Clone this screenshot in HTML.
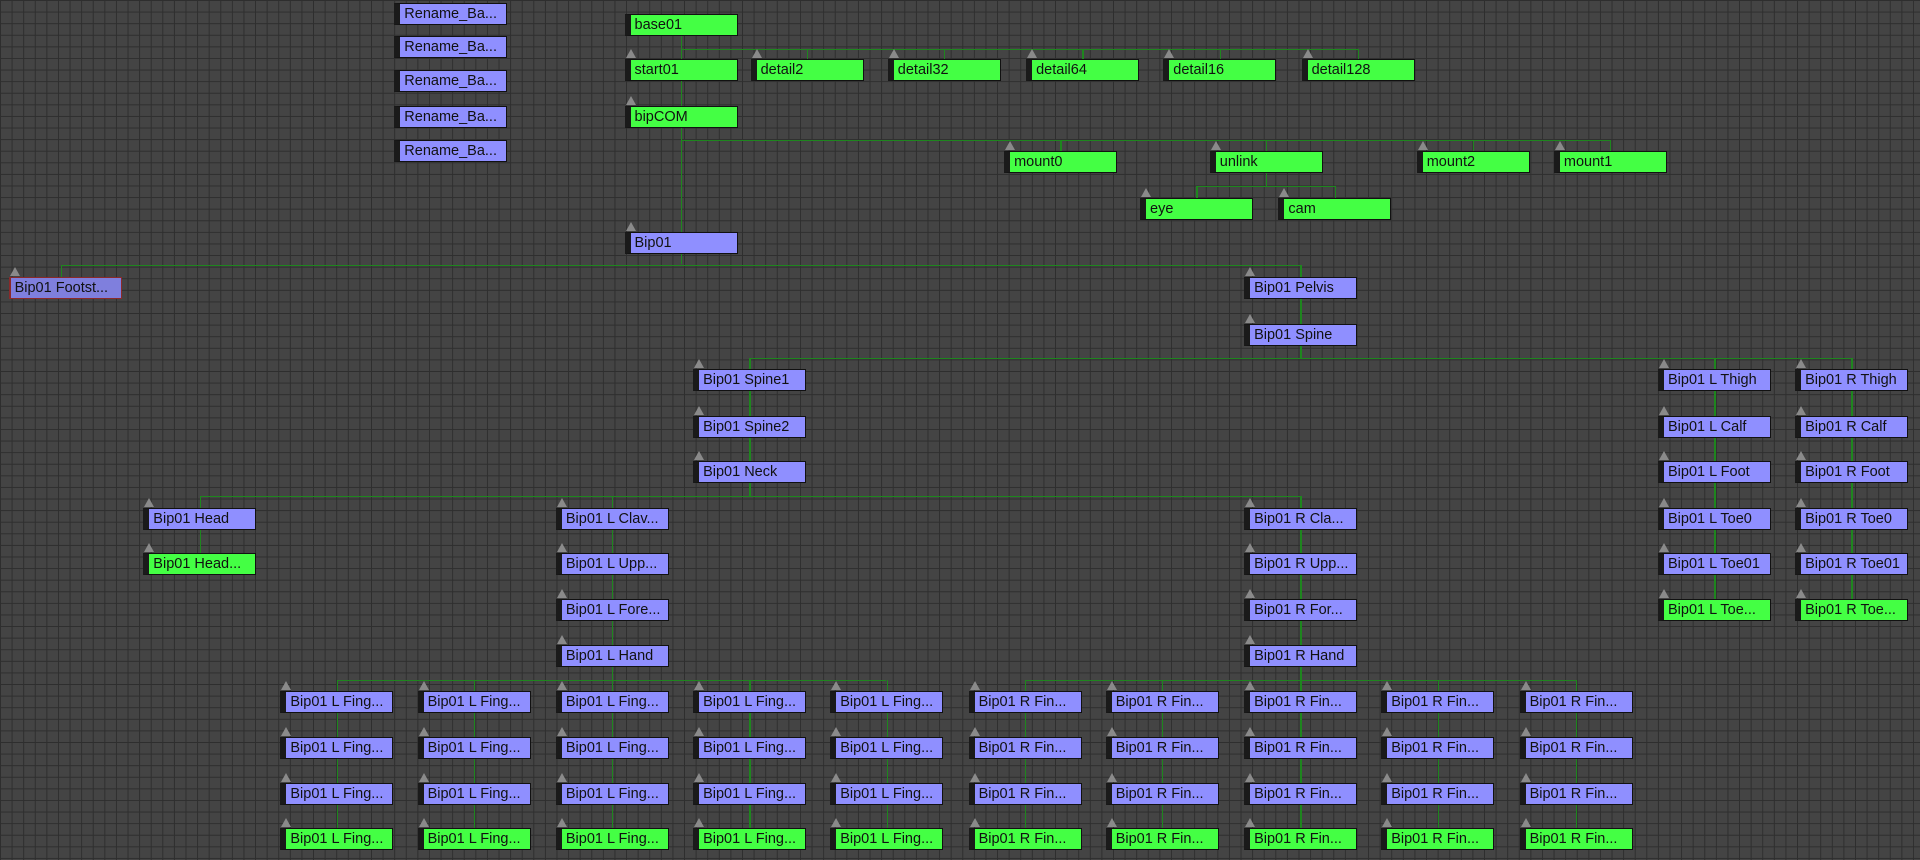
<!DOCTYPE html>
<html><head><meta charset="utf-8"><style>
html,body{margin:0;padding:0}
body{width:1920px;height:860px;overflow:hidden;position:relative;
background-color:#444;
background-image:linear-gradient(to right,#2e2e2e 1px,transparent 1px),linear-gradient(to bottom,#2e2e2e 1px,transparent 1px);
background-size:11.6px 11.6px;font-family:"Liberation Sans",sans-serif}
.n{position:absolute;width:106px;height:20px;border:1px solid #111;border-left:6px solid #1a1a1a;box-sizing:content-box;font-size:14.5px;line-height:20px;padding-left:0;color:#111;white-space:nowrap;overflow:hidden}
.n span{padding-left:4px}
.g{background:#44ff44}
.p{background:#8f8fff}
.t{position:absolute;width:0;height:0;border-left:5px solid transparent;border-right:5px solid transparent;border-bottom:9px solid #8a8a8a}
.l{position:absolute;background:#1e861e}
</style></head><body>
<div id="c"></div>
<script>
var S=1920/1568;
var R=[20,57,95,132,170,198,235,273,310,348,385,423,460,498,535,573,610,648,685];
var c=document.getElementById('c');var h='';
function node(x,yc,txt,cls,tri,extra){
 var L=x*S,T=(yc-8.5)*S;
 h+='<div class="n '+cls+'" style="left:'+L.toFixed(1)+'px;top:'+T.toFixed(1)+'px;'+(extra||'')+'"><span>'+txt+'</span></div>';
 if(tri!==false)h+='<div class="t" style="left:'+(L+1).toFixed(1)+'px;top:'+(T-10).toFixed(1)+'px"></div>';
}
function line(x1,y1,x2,y2){
 var a=Math.min(x1,x2)*S,b=Math.min(y1,y2)*S,w=Math.abs(x2-x1)*S,hh=Math.abs(y2-y1)*S;
 h+='<div class="l" style="left:'+a.toFixed(1)+'px;top:'+b.toFixed(1)+'px;width:'+Math.max(w,1.3).toFixed(1)+'px;height:'+Math.max(hh,1.3).toFixed(1)+'px"></div>';
}
function cx(x){return x+46}
function tree(px,py,kids,by){
 line(cx(px),py+8,cx(px),by);
 var xs=kids.map(function(k){return cx(k[0])});xs.push(cx(px));
 line(Math.min.apply(null,xs),by,Math.max.apply(null,xs),by);
 kids.forEach(function(k){line(cx(k[0]),by,cx(k[0]),k[1]-8)});
}
function chain(x,rows){for(var i=0;i<rows.length-1;i++)line(cx(x),rows[i]+8,cx(x),rows[i+1]-8)}
tree(510,R[0],[[510,R[1]],[613,R[1]],[725,R[1]],[838,R[1]],[950,R[1]],[1063,R[1]]],40);
chain(510,[R[1],R[2]]);
tree(510,R[2],[[820,R[3]],[988,R[3]],[1157,R[3]],[1269,R[3]],[510,198]],114);
tree(988,R[3],[[931,R[4]],[1044,R[4]]],152);
tree(510,198,[[4,235],[1016,235]],216);
chain(1016,[R[6],R[7]]);
tree(1016,R[7],[[566,R[8]],[1354,R[8]],[1466,R[8]]],292);
chain(566,[R[8],R[9],R[10]]);
tree(566,R[10],[[117,R[11]],[454,R[11]],[1016,R[11]]],405);
chain(117,[R[11],R[12]]);
chain(454,[R[11],R[12],R[13],R[14]]);
chain(1016,[R[11],R[12],R[13],R[14]]);
chain(1354,[R[8],R[9],R[10],R[11],R[12],R[13]]);
chain(1466,[R[8],R[9],R[10],R[11],R[12],R[13]]);
var LF=[229,341,454,566,678],RF=[791,903,1016,1128,1241];
tree(454,R[14],LF.map(function(x){return[x,R[15]]}),555);
tree(1016,R[14],RF.map(function(x){return[x,R[15]]}),555);
LF.concat(RF).forEach(function(x){chain(x,[R[15],R[16],R[17],R[18]])});
[11,38,66,95,123].forEach(function(y){node(322,y,'Rename_Ba...','p',false)});
node(510,R[0],'base01','g',false);
node(510,R[1],'start01','g');
[[613,'detail2'],[725,'detail32'],[838,'detail64'],[950,'detail16'],[1063,'detail128']].forEach(function(d){node(d[0],R[1],d[1],'g')});
node(510,R[2],'bipCOM','g');
node(820,R[3],'mount0','g');node(988,R[3],'unlink','g');node(1157,R[3],'mount2','g');node(1269,R[3],'mount1','g');
node(931,R[4],'eye','g');node(1044,R[4],'cam','g');
node(510,198,'Bip01','p');
node(7,235,'Bip01 Footst...','p',true,'border:1px solid #8a2a2a;border-left:2px solid #8a2a2a;width:110px;background:#7f7fdd');
node(1016,R[6],'Bip01 Pelvis','p');node(1016,R[7],'Bip01 Spine','p');
node(566,R[8],'Bip01 Spine1','p');node(566,R[9],'Bip01 Spine2','p');node(566,R[10],'Bip01 Neck','p');
var LL=['Bip01 L Thigh','Bip01 L Calf','Bip01 L Foot','Bip01 L Toe0','Bip01 L Toe01','Bip01 L Toe...'];
var RL=['Bip01 R Thigh','Bip01 R Calf','Bip01 R Foot','Bip01 R Toe0','Bip01 R Toe01','Bip01 R Toe...'];
for(var i=0;i<6;i++){node(1354,R[8+i],LL[i],i==5?'g':'p');node(1466,R[8+i],RL[i],i==5?'g':'p');}
node(117,R[11],'Bip01 Head','p');node(117,R[12],'Bip01 Head...','g');
['Bip01 L Clav...','Bip01 L Upp...','Bip01 L Fore...','Bip01 L Hand'].forEach(function(t,i){node(454,R[11+i],t,'p')});
['Bip01 R Cla...','Bip01 R Upp...','Bip01 R For...','Bip01 R Hand'].forEach(function(t,i){node(1016,R[11+i],t,'p')});
for(var r=0;r<4;r++){
 LF.forEach(function(x){node(x,R[15+r],'Bip01 L Fing...',r==3?'g':'p')});
 RF.forEach(function(x){node(x,R[15+r],'Bip01 R Fin...',r==3?'g':'p')});
}
c.innerHTML=h;
</script>
</body></html>
